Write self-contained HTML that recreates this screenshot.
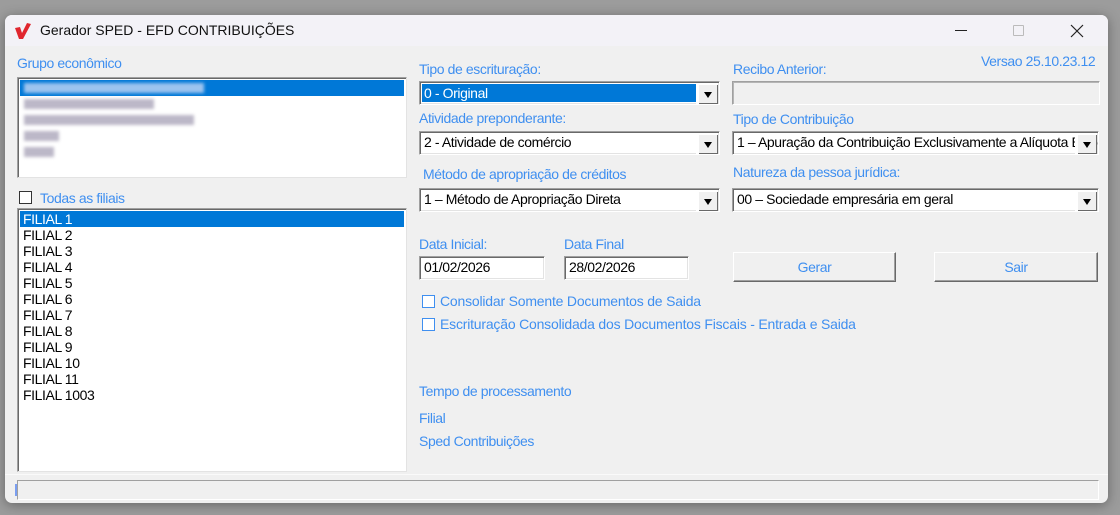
<!DOCTYPE html>
<html><head><meta charset="utf-8"><style>
*{margin:0;padding:0;box-sizing:border-box}
body{width:1120px;height:515px;background:#9c9c9c;position:relative;overflow:hidden;font-family:"Liberation Sans",sans-serif;font-size:13px}
.abs{position:absolute}
#win{left:5px;top:15px;width:1103px;height:488px;background:#f0f0f0;border-radius:7px;overflow:hidden;box-shadow:0 2px 12px rgba(0,0,0,.35)}
#title{left:0;top:0;width:1103px;height:31px;background:#f3f2f7}
.lbl{position:absolute;color:#3f8ff0;font-size:14px;letter-spacing:-0.4px;white-space:nowrap;line-height:16px}
.box{position:absolute;background:#fff;border:1px solid #a0a0a0;border-right-color:#e3e3e3;border-bottom-color:#e3e3e3;box-shadow:inset 1px 1px 0 #696969}
.combo{position:absolute;background:#fff;border:1px solid #a0a0a0;border-right-color:#fff;border-bottom-color:#fff;box-shadow:inset 1px 1px 0 #696969, inset -1px -1px 0 #e3e3e3;font-size:14px;letter-spacing:-0.4px;line-height:21px;padding-left:4px;white-space:nowrap;overflow:hidden;color:#000}
.arr{position:absolute;right:1px;top:2px;width:20px;height:20px;background:#f0f0f0;border-left:1px solid #fff;border-top:1px solid #fff;box-shadow:inset -1px -1px 0 #696969, -2px 0 0 #fff;z-index:2}
.arr:after{content:"";position:absolute;left:5px;top:7px;border-left:4px solid transparent;border-right:4px solid transparent;border-top:6px solid #000}
.row{position:absolute;left:2px;height:16px;line-height:16px;font-size:14px;letter-spacing:-0.4px;padding-left:3px;white-space:nowrap}
.cb{position:absolute;width:13px;height:13px;border:1px solid #333;background:#fff}
.cbb{border-color:#3f8ff0}
.btn{position:absolute;background:#f0f0f0;border:1px solid #fff;border-right-color:#696969;border-bottom-color:#696969;box-shadow:inset -1px -1px 0 #a0a0a0;color:#3f8ff0;font-size:14px;letter-spacing:-0.4px;text-align:center;line-height:28px}
.blur{position:absolute;height:10px;background:#bcb8c8;filter:blur(1.5px)}
</style></head><body>
<div id="win" class="abs">
 <div id="title" class="abs">
  <svg class="abs" style="left:9px;top:7px" width="18" height="18" viewBox="0 0 18 18"><path d="M1 6 L6 5 L8 11 L13 1 L17 2 L9 17 L5 17 Z" fill="#e0262e"/></svg>
  <div class="abs" style="left:35px;top:7px;font-size:14px;color:#111;white-space:nowrap">Gerador SPED - EFD CONTRIBUIÇÕES</div>
  <div class="abs" style="left:950px;top:15px;width:12px;height:1px;background:#222"></div>
  <div class="abs" style="left:1008px;top:10px;width:11px;height:11px;border:1px solid #bbb;border-radius:1px"></div>
  <svg class="abs" style="left:1065px;top:9px" width="14" height="14"><path d="M1 1L13 13M13 1L1 13" stroke="#222" stroke-width="1.2"/></svg>
 </div>
</div>
<div class="lbl" style="left:17px;top:55px">Grupo econômico</div>
<div class="box" style="left:17px;top:77px;width:390px;height:101px">
 <div class="row" style="top:2px;width:384px;background:#0078d7"></div>
 <div class="blur" style="left:6px;top:5px;width:180px;background:#9cc4ef"></div>
 <div class="blur" style="left:6px;top:21px;width:130px"></div>
 <div class="blur" style="left:6px;top:37px;width:170px"></div>
 <div class="blur" style="left:6px;top:53px;width:35px"></div>
 <div class="blur" style="left:6px;top:69px;width:30px"></div>
</div>
<div class="cb" style="left:19px;top:191px;border-color:#333"></div>
<div class="lbl" style="left:40px;top:190px">Todas as filiais</div>
<div class="box" style="left:17px;top:208px;width:390px;height:264px">
 <div class="row" style="top:2px;width:384px;background:#0078d7;color:#fff">FILIAL 1</div>
 <div class="row" style="top:18px">FILIAL 2</div>
 <div class="row" style="top:34px">FILIAL 3</div>
 <div class="row" style="top:50px">FILIAL 4</div>
 <div class="row" style="top:66px">FILIAL 5</div>
 <div class="row" style="top:82px">FILIAL 6</div>
 <div class="row" style="top:98px">FILIAL 7</div>
 <div class="row" style="top:114px">FILIAL 8</div>
 <div class="row" style="top:130px">FILIAL 9</div>
 <div class="row" style="top:146px">FILIAL 10</div>
 <div class="row" style="top:162px">FILIAL 11</div>
 <div class="row" style="top:178px">FILIAL 1003</div>
</div>

<div class="lbl" style="left:981px;top:53px">Versao 25.10.23.12</div>
<div class="lbl" style="left:419px;top:61px">Tipo de escrituração:</div>
<div class="combo" style="left:419px;top:81px;width:301px;height:24px"><span style="display:inline-block;background:#0078d7;color:#fff;width:274px;margin-left:-2px;padding-left:2px;line-height:18px;margin-top:2px;vertical-align:top">0 - Original</span><div class="arr"></div></div>
<div class="lbl" style="left:733px;top:61px">Recibo Anterior:</div>
<div class="abs" style="left:732px;top:81px;width:368px;height:24px;background:#f0f0f0;border:1px solid #a0a0a0;border-right-color:#fff;border-bottom-color:#fff;box-shadow:inset 1px 1px 0 #b5b5b5"></div>

<div class="lbl" style="left:419px;top:110px">Atividade preponderante:</div>
<div class="combo" style="left:419px;top:131px;width:301px;height:24px">2 - Atividade de comércio<div class="arr"></div></div>
<div class="lbl" style="left:733px;top:111px">Tipo de Contribuição</div>
<div class="combo" style="left:732px;top:131px;width:367px;height:24px">1 – Apuração da Contribuição Exclusivamente a Alíquota Básica<div class="arr"></div></div>

<div class="lbl" style="left:423px;top:166px">Método de apropriação de créditos</div>
<div class="combo" style="left:419px;top:188px;width:301px;height:24px">1 – Método de Apropriação Direta<div class="arr"></div></div>
<div class="lbl" style="left:733px;top:164px">Natureza da pessoa jurídica:</div>
<div class="combo" style="left:732px;top:188px;width:367px;height:24px">00 – Sociedade empresária em geral<div class="arr"></div></div>

<div class="lbl" style="left:419px;top:236px">Data Inicial:</div>
<div class="combo" style="left:419px;top:256px;width:126px;height:24px">01/02/2026</div>
<div class="lbl" style="left:564px;top:236px">Data Final</div>
<div class="combo" style="left:564px;top:256px;width:125px;height:24px">28/02/2026</div>
<div class="btn" style="left:733px;top:252px;width:163px;height:30px">Gerar</div>
<div class="btn" style="left:934px;top:252px;width:164px;height:30px">Sair</div>

<div class="cb cbb" style="left:422px;top:295px"></div>
<div class="lbl" style="left:440px;top:293px;letter-spacing:-0.2px">Consolidar Somente Documentos de Saida</div>
<div class="cb cbb" style="left:422px;top:318px"></div>
<div class="lbl" style="left:440px;top:316px;letter-spacing:-0.2px">Escrituração Consolidada dos Documentos Fiscais - Entrada e Saida</div>

<div class="lbl" style="left:419px;top:383px">Tempo de processamento</div>
<div class="lbl" style="left:419px;top:410px">Filial</div>
<div class="lbl" style="left:419px;top:433px">Sped Contribuições</div>

<div class="abs" style="left:5px;top:474px;width:1103px;height:1px;background:#fafafa"></div>
<div class="abs" style="left:17px;top:480px;width:1082px;height:20px;border:1px solid #a0a0a0;border-right-color:#fff;border-bottom-color:#fff;background:#f0f0f0"></div>
<div class="abs" style="left:15px;top:484px;width:2px;height:12px;background:#7a9ef0"></div>
</body></html>
